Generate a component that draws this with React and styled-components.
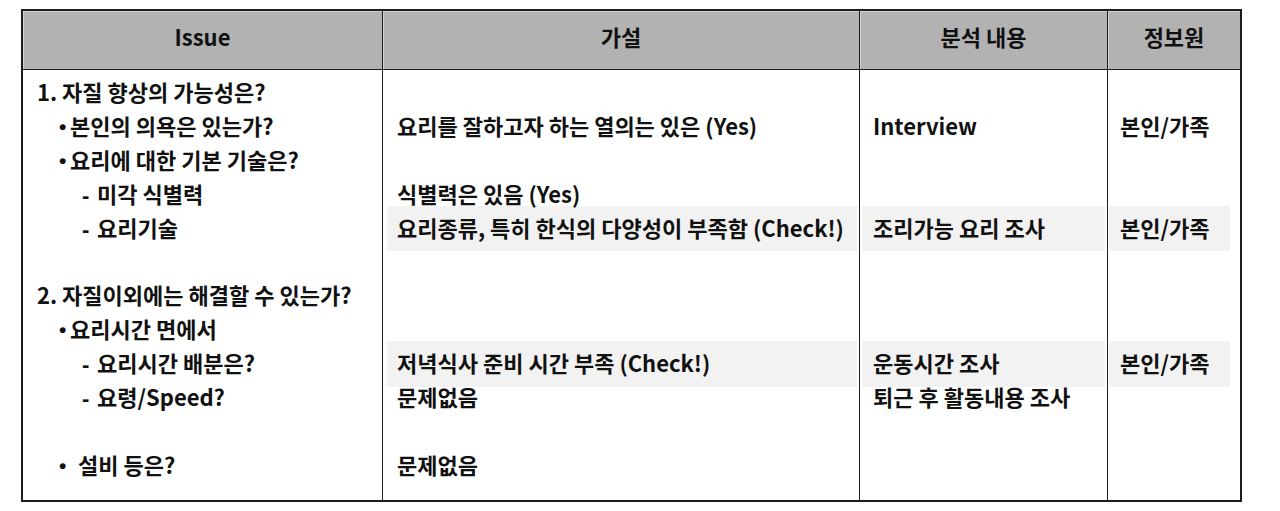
import styled, { createGlobalStyle } from 'styled-components'

const GlobalStyle = createGlobalStyle`
  * { box-sizing: border-box; }
  body {
    margin: 0;
    background: #ffffff;
    font-family: "Noto Sans CJK KR", "Noto Sans", sans-serif;
    color: #111;
  }
`;

const Page = styled.div`
  padding: 9px 0 0 21px;
`;

const Table = styled.div`
  width: 1221px;
  height: 493px;
  border: 2px solid #1c1c1c;
  display: grid;
  grid-template-columns: 360px 477px 248px 132px;
  grid-template-rows: 59px 1fr;
`;

const Head = styled.div`
  background: #b2b2b2;
  box-shadow: inset 1px 1px 0 #d2d2d2;
  border-bottom: 1px solid #1c1c1c;
  border-right: ${p => (p.last ? 'none' : '1px solid #1c1c1c')};
  display: flex;
  align-items: center;
  justify-content: center;
  padding-bottom: 8px;
  font-size: 22px;
  font-weight: 700;
`;

const Col = styled.div`
  border-right: ${p => (p.last ? 'none' : '1px solid #1c1c1c')};
  padding: 5px ${p => p.pr || 0}px 0 ${p => p.pl || 0}px;
  font-size: 22px;
  font-weight: 700;
`;

const Line = styled.div`
  height: 33.9px;
  line-height: 33.9px;
  white-space: nowrap;
  padding-left: ${p => p.indent || 0}px;
  ${p => p.mark && `
    background: #f2f2f2;
    height: 45.9px;
    padding-top: 5px;
    margin: -5px 0 -7px;
  `}
`;

const Mark = styled.span`
  display: inline-block;
  width: ${p => p.w}px;
  font-family: "Liberation Sans", sans-serif;
  font-size: ${p => p.size || 22}px;
  vertical-align: ${p => p.lift || 0}px;
`;

const bullet = { mark: '•', size: 21, lift: 1 };
const dash = { mark: '-', w: 15 };

const issues = [
  { text: '1. 자질 향상의 가능성은?', indent: 14 },
  { text: '본인의 의욕은 있는가?', indent: 36, w: 11, ...bullet },
  { text: '요리에 대한 기본 기술은?', indent: 36, w: 11, ...bullet },
  { text: '미각 식별력', indent: 59, ...dash },
  { text: '요리기술', indent: 59, ...dash },
  null,
  { text: '2. 자질이외에는 해결할 수 있는가?', indent: 14 },
  { text: '요리시간 면에서', indent: 36, w: 11, ...bullet },
  { text: '요리시간 배분은?', indent: 59, ...dash },
  { text: '요령/Speed?', indent: 59, ...dash },
  null,
  { text: '설비 등은?', indent: 36, w: 19, ...bullet },
];

// 12 lines per column, '' = empty, {t} = shaded line
const hypo = [
  '', '요리를 잘하고자 하는 열의는 있은 (Yes)', '', '식별력은 있음 (Yes)',
  { t: '요리종류, 특히 한식의 다양성이 부족함 (Check!)' }, '', '', '',
  { t: '저녁식사 준비 시간 부족 (Check!)' }, '문제없음', '', '문제없음',
];

const analysis = [
  '', 'Interview', '', '', { t: '조리가능 요리 조사' }, '', '', '',
  { t: '운동시간 조사' }, '퇴근 후 활동내용 조사', '', '',
];

const source = [
  '', '본인/가족', '', '', { t: '본인/가족' }, '', '', '',
  { t: '본인/가족' }, '', '', '',
];

const Lines = ({ items, pad }) =>
  items.map((it, i) =>
    typeof it === 'string' ? (
      <Line key={i} indent={pad}>{it}</Line>
    ) : (
      <Line key={i} indent={pad} mark>{it.t}</Line>
    )
  );

const App = () => {
  return (
    <Page>
      <GlobalStyle />
      <Table>
        <Head>Issue</Head>
        <Head>가설</Head>
        <Head>분석 내용</Head>
        <Head last>정보원</Head>

        <Col>
          {issues.map((it, i) =>
            it ? (
              <Line key={i} indent={it.indent}>
                {it.mark && (
                  <Mark w={it.w} size={it.size} lift={it.lift}>{it.mark}</Mark>
                )}
                {it.text}
              </Line>
            ) : (
              <Line key={i} />
            )
          )}
        </Col>
        <Col pl={4} pr={2}>
          <Lines items={hypo} pad={10} />
        </Col>
        <Col pl={2} pr={2}>
          <Lines items={analysis} pad={11} />
        </Col>
        <Col pl={1} pr={10} last>
          <Lines items={source} pad={11} />
        </Col>
      </Table>
    </Page>
  )
}

export default App
